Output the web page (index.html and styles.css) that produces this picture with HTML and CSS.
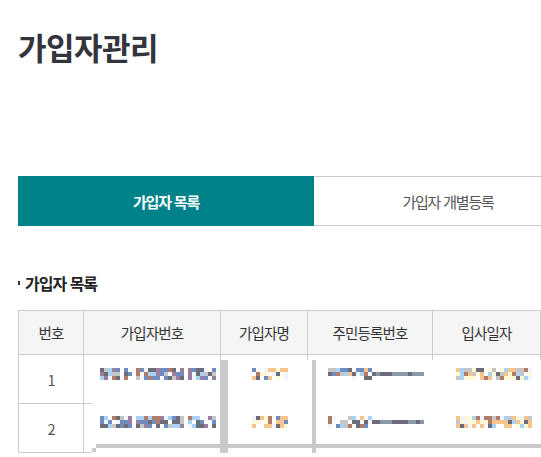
FILE: index.html
```html
<!DOCTYPE html>
<html lang="ko">
<head>
<meta charset="utf-8">
<link rel="stylesheet" href="styles.css">
</head>
<body>
<div class="page">
  <h1 class="title">가입자관리</h1>
  <div class="tabs">
    <div class="tab active">가입자 목록</div>
    <div class="tab">가입자 개별등록</div>
  </div>
  <h2 class="section"><span class="bullet"></span>가입자 목록</h2>
  <div class="table-wrap">
    <table class="grid">
      <colgroup>
        <col class="c-no"><col class="c-id"><col class="c-name"><col class="c-rrn"><col class="c-date"><col class="c-more">
      </colgroup>
      <thead>
        <tr><th>번호</th><th>가입자번호</th><th>가입자명</th><th>주민등록번호</th><th>입사일자</th><th></th></tr>
      </thead>
      <tbody>
        <tr><td>1</td><td></td><td></td><td></td><td></td><td></td></tr>
        <tr><td>2</td><td></td><td></td><td></td><td></td><td></td></tr>
      </tbody>
    </table>
    <div class="redact">
      <div class="bar bar-v1"></div>
      <div class="bar bar-v2"></div>
      <div class="bar bar-h"></div>
      <div class="bar bar-sq"></div>
      <div class="mosaic m-id r1" data-w="29" data-seed="3"></div>
      <div class="mosaic m-id r2" data-w="29" data-seed="7"></div>
      <div class="mosaic m-name r1" data-w="9" data-seed="11"></div>
      <div class="mosaic m-name r2" data-w="9" data-seed="13"></div>
      <div class="mosaic m-rrn r1" data-w="24" data-seed="17" data-dash="11"></div>
      <div class="mosaic m-rrn r2" data-w="24" data-seed="19" data-dash="11"></div>
      <div class="mosaic m-date r1" data-w="19" data-seed="23"></div>
      <div class="mosaic m-date r2" data-w="19" data-seed="29"></div>
    </div>
  </div>
</div>
<script src="script.js"></script>
</body>
</html>
```
FILE: styles.css
```css
html, body {
  margin: 0;
  padding: 0;
  background: #fff;
  overflow: hidden;
}
body {
  font-family: "Noto Sans CJK KR", "Noto Sans", sans-serif;
  color: #333;
}
.page {
  width: 700px;
  padding-left: 18px;
}
.title {
  margin: 0;
  padding-top: 29px;
  font-size: 31px;
  line-height: 36px;
  font-weight: 700;
  color: #34343c;
  letter-spacing: -0.5px;
}
.tabs {
  margin-top: 111px;
  display: flex;
  height: 50px;
}
.tab {
  display: flex;
  align-items: center;
  justify-content: center;
  font-size: 15px;
  letter-spacing: -1.2px;
  color: #555;
  border-top: 1px solid #ccc;
  border-bottom: 1px solid #ccc;
  box-sizing: border-box;
  width: 268px;
}
.tab.active {
  width: 296px;
  background: #00828a;
  color: #fff;
  font-weight: 700;
  border-color: #00828a;
}
.section {
  margin: 47px 0 0 0;
  font-size: 16px;
  line-height: 20px;
  font-weight: 700;
  color: #222;
  letter-spacing: -1px;
  display: flex;
  align-items: center;
}
.bullet {
  display: inline-block;
  width: 2px;
  height: 4px;
  background: #333;
  margin-right: 5px;
}
.table-wrap {
  position: relative;
  margin-top: 17px;
}
.grid {
  border-collapse: collapse;
  table-layout: fixed;
  width: 662px;
}
.c-no { width: 65px; }
.c-id { width: 137px; }
.c-name { width: 87px; }
.c-rrn { width: 125px; }
.c-date { width: 108px; }
.c-more { width: 140px; }
.grid th, .grid td {
  border: 1px solid #ccc;
  text-align: center;
  font-size: 14.5px;
  letter-spacing: -0.8px;
  padding: 0;
}
.grid th {
  height: 43px;
  background: #f5f5f5;
  font-weight: 400;
  color: #333;
}
.grid td {
  height: 48px;
  color: #555;
}
.redact {
  position: absolute;
  left: 74px;
  top: 50px;
  width: 600px;
  height: 120px;
  background: #fff;
}
.bar {
  position: absolute;
  background: #cacaca;
}
.bar-v1 { left: 128px; top: 0; width: 8px; height: 120px; }
.bar-v2 { left: 220px; top: 0; width: 4px; height: 120px; }
.bar-h { left: 4px; top: 84px; width: 600px; height: 4px; }
.bar-sq { left: 0; top: 88px; width: 4px; height: 4px; }
.mosaic {
  position: absolute;
  display: grid;
  grid-auto-rows: 4px;
  grid-auto-columns: 4px;
  grid-auto-flow: column;
  grid-template-rows: repeat(3, 4px);
}
.mosaic span { display: block; width: 4px; height: 4px; }
.r1 { top: 8px; }
.r2 { top: 56px; }
.m-id { left: 8px; }
.m-name { left: 160px; }
.m-rrn { left: 236px; }
.m-date { left: 364px; }
.k0 { background: transparent; }
.k1 { background: #6c6c78; }
.k2 { background: #6f8cc0; }
.k3 { background: #a9d3f5; }
.k4 { background: #f7c48e; }
.k5 { background: #b27a68; }
.k6 { background: #eef6fb; }
.k7 { background: #fff8d6; }
.k8 { background: #c6c6c6; }
.k9 { background: #9a7fa0; }
.k10 { background: #8a98a8; }
```
FILE: script.js
```js
(function () {
  function rng(seed) {
    var s = seed * 9301 + 49297;
    return function () {
      s = (s * 9301 + 49297) % 233280;
      return s / 233280;
    };
  }
  var palettes = {
    "m-id": ["k1","k2","k1","k5","k3","k6","k2","k8","k0","k0","k9"],
    "m-name": ["k4","k1","k0","k0","k4","k6","k5","k7","k2"],
    "m-rrn": ["k1","k2","k0","k0","k3","k5","k4","k6","k8"],
    "m-date": ["k4","k7","k6","k0","k5","k3","k8","k1","k7","k4"]
  };
  var els = document.querySelectorAll(".mosaic");
  for (var i = 0; i < els.length; i++) {
    var el = els[i];
    var w = parseInt(el.getAttribute("data-w"), 10);
    var r = rng(parseInt(el.getAttribute("data-seed"), 10));
    var dash = el.getAttribute("data-dash");
    dash = dash ? parseInt(dash, 10) : -1;
    var key = "m-id";
    for (var k in palettes) { if (el.classList.contains(k)) key = k; }
    var pal = palettes[key];
    for (var c = 0; c < w; c++) {
      for (var row = 0; row < 3; row++) {
        var s = document.createElement("span");
        var cls;
        if (dash >= 0 && c >= dash) {
          cls = row === 1 ? (r() < 0.5 ? "k10" : "k1") : "k0";
        } else if (key === "m-id" && (c === 8 || c === 21)) {
          cls = "k0";
        } else {
          cls = pal[Math.floor(r() * pal.length)];
        }
        s.className = cls;
        el.appendChild(s);
      }
    }
  }
})();
```
